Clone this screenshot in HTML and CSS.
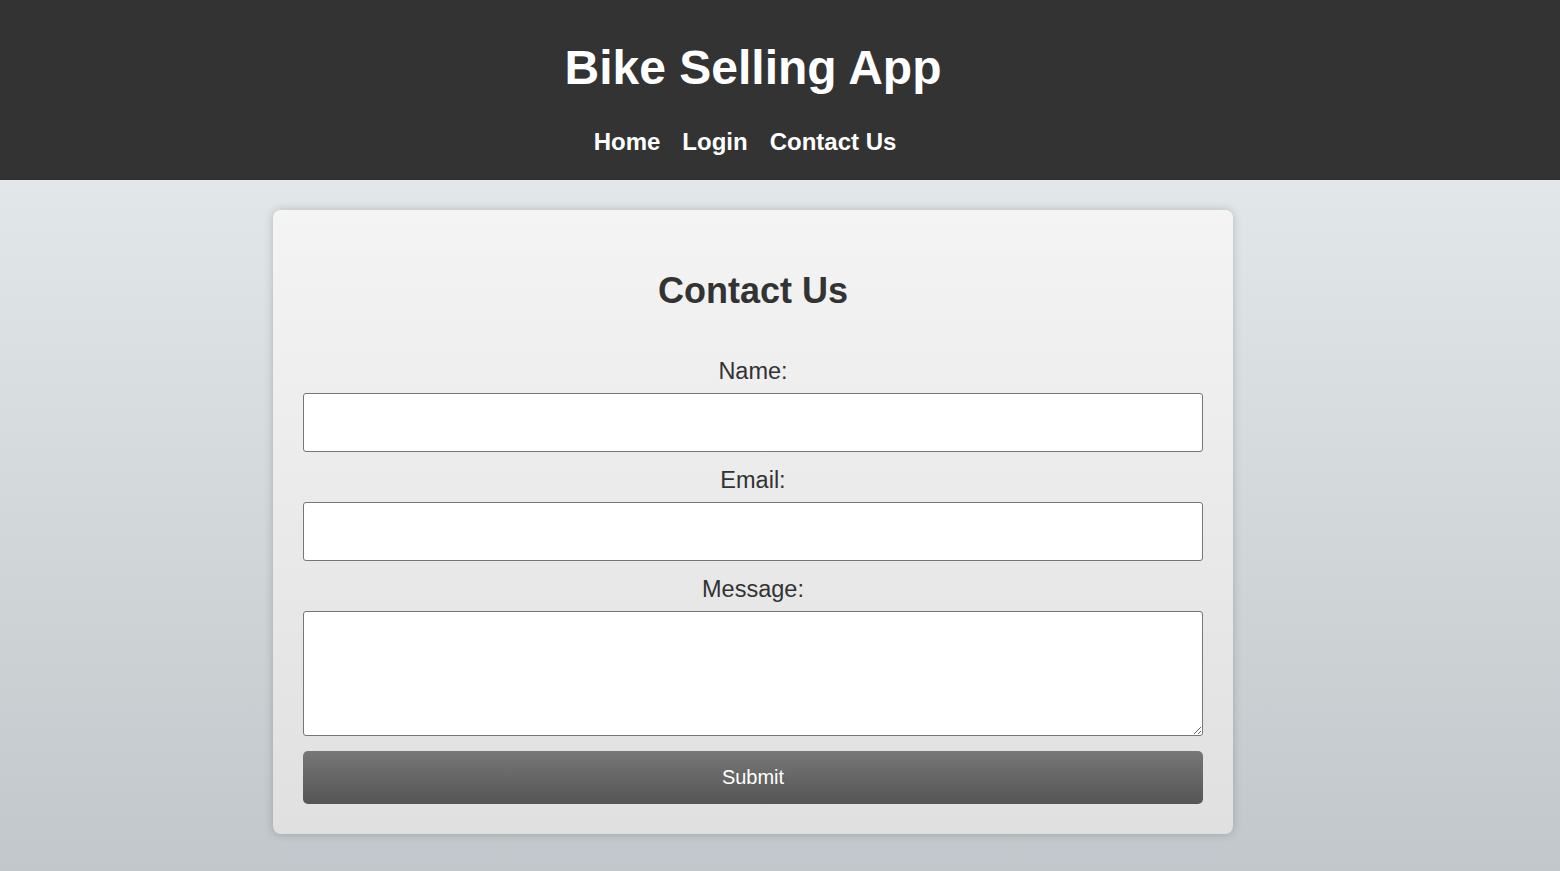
FILE: index.html
```html
<!DOCTYPE html>
<html lang="en">
<head>
<meta charset="utf-8">
<title>Bike Selling App</title>
<link rel="stylesheet" href="styles.css">
</head>
<body>
<header class="site-header">
  <div class="header-inner">
    <h1 class="site-title">Bike Selling App</h1>
    <nav class="site-nav">
      <a href="#" class="nav-link">Home</a>
      <a href="#" class="nav-link">Login</a>
      <a href="#" class="nav-link">Contact Us</a>
    </nav>
  </div>
</header>
<main class="main">
  <section class="card">
    <h2 class="card-title">Contact Us</h2>
    <form class="contact-form">
      <label class="field-label" for="name">Name:</label>
      <input class="field-input" type="text" id="name">
      <label class="field-label" for="email">Email:</label>
      <input class="field-input" type="email" id="email">
      <label class="field-label" for="message">Message:</label>
      <textarea class="field-textarea" id="message"></textarea>
      <button class="submit-btn" type="button">Submit</button>
    </form>
  </section>
</main>
</body>
</html>
```
FILE: styles.css
```css
html, body {
  margin: 0;
  padding: 0;
}
body {
  font-family: "Liberation Sans", Arial, sans-serif;
  min-height: 871px;
  background: linear-gradient(to bottom, #e2e7e9 0px, #e2e7e9 180px, #c2c7cb 871px);
  color: #333;
}
.site-header {
  background: #333333;
  height: 180px;
  box-sizing: border-box;
  padding-top: 40px;
}
.header-inner {
  width: 1506px;
  text-align: center;
}
.site-title {
  margin: 0;
  font-size: 48px;
  line-height: 56px;
  font-weight: bold;
  color: #fff;
}
.site-nav {
  margin-top: 32px;
  display: flex;
  justify-content: center;
  gap: 22px;
  padding-right: 16px;
}
.nav-link {
  color: #fff;
  text-decoration: none;
  font-weight: bold;
  font-size: 24px;
  line-height: 28px;
}
.main {
  width: 1506px;
  display: flex;
  justify-content: center;
  padding-top: 30px;
}
.card {
  width: 960px;
  box-sizing: border-box;
  padding: 30px;
  border-radius: 8px;
  background: linear-gradient(to bottom, #f4f4f4, #e0e0e0);
  box-shadow: 0 0 10px rgba(0, 0, 0, 0.2);
  text-align: center;
}
.card-title {
  margin: 30px 0 47px;
  font-size: 36px;
  line-height: 41px;
  font-weight: bold;
  color: #333;
}
.contact-form {
  display: flex;
  flex-direction: column;
  align-items: stretch;
}
.field-label {
  display: block;
  font-size: 23.5px;
  line-height: 27px;
  margin-bottom: 8px;
  color: #333;
}
.field-input,
.field-textarea {
  display: block;
  width: 100%;
  box-sizing: border-box;
  border: 1px solid #767676;
  border-radius: 3px;
  background: #fff;
  font-family: inherit;
  font-size: 16px;
  margin: 0 0 15px;
}
.field-input {
  height: 59px;
}
.field-textarea {
  height: 125px;
  resize: vertical;
  margin-bottom: 15px;
}
.submit-btn {
  display: block;
  width: 100%;
  height: 53px;
  border: none;
  border-radius: 5px;
  background: linear-gradient(to bottom, #777777, #555555);
  color: #fff;
  font-family: inherit;
  font-size: 20px;
  cursor: pointer;
}
```
